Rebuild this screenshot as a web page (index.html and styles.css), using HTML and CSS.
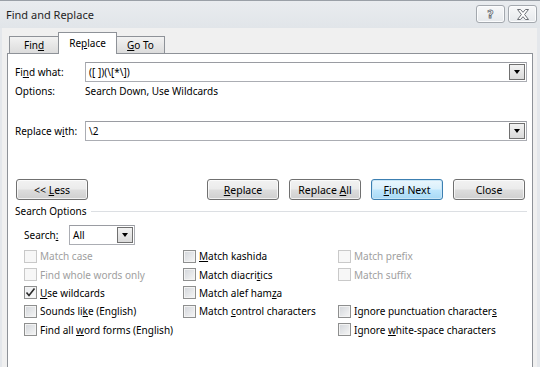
FILE: index.html
```html
<!DOCTYPE html>
<html>
<head>
    <title>Find and Replace</title>
    <meta charset='utf-8'>
    <link rel="stylesheet" href="styles.css">
</head>
<body>
    <div class="window">
        <div class="titlebar">
            <span class="title">Find and Replace</span>
            <div class="caption-buttons">
                <span class="cap-btn help">?</span>
                <span class="cap-btn close">
                    <svg width="14" height="11" viewBox="0 0 14 11">
                        <path d="M1.5 0.5 H4.5 L7 3.3 L9.5 0.5 H12.5 L8.6 5.5 L12.5 10.5 H9.5 L7 7.7 L4.5 10.5 H1.5 L5.4 5.5 Z" fill="#fff" stroke="#6b6f75" stroke-width="1"/>
                    </svg>
                </span>
            </div>
        </div>

        <div class="client">
            <div class="tabs">
                <span class="tab"><span>Fin<u>d</u></span></span>
                <span class="tab active"><span>Re<u>p</u>lace</span></span>
                <span class="tab"><span><u>G</u>o To</span></span>
            </div>

            <div class="panel">
                <!-- find / replace fields -->
                <div class="field-row find-row">
                    <span class="field-label">Fi<u>n</u>d what:</span>
                    <div class="combo">
                        <span class="combo-text">([ ])(\[*\])</span>
                        <span class="drop"><i></i></span>
                    </div>
                </div>
                <div class="field-row options-row">
                    <span class="field-label">Options:</span>
                    <span>Search Down, Use Wildcards</span>
                </div>
                <div class="field-row replace-row">
                    <span class="field-label">Replace w<u>i</u>th:</span>
                    <div class="combo">
                        <span class="combo-text">\2</span>
                        <span class="drop"><i></i></span>
                    </div>
                </div>

                <div class="buttons">
                    <button class="btn">&lt;&lt; <u>L</u>ess</button>
                    <div class="btn-group">
                        <button class="btn"><u>R</u>eplace</button>
                        <button class="btn">Replace <u>A</u>ll</button>
                        <button class="btn default"><u>F</u>ind Next</button>
                        <button class="btn">Close</button>
                    </div>
                </div>

                <div class="group-title">
                    <span>Search Options</span>
                    <span class="rule"></span>
                </div>

                <div class="search-row">
                    <span class="search-label">Search<u>:</u></span>
                    <div class="combo small">
                        <span class="combo-text">All</span>
                        <span class="drop"><i></i></span>
                    </div>
                </div>

                <div class="checks">
                    <label class="check disabled"><span class="box"></span><span>Match case</span></label>
                    <label class="check"><span class="box"></span><span><u>M</u>atch kashida</span></label>
                    <label class="check disabled"><span class="box"></span><span>Match prefix</span></label>

                    <label class="check disabled"><span class="box"></span><span>Find whole words only</span></label>
                    <label class="check"><span class="box"></span><span>Match diacri<u>t</u>ics</span></label>
                    <label class="check disabled"><span class="box"></span><span>Match suffix</span></label>

                    <label class="check checked"><span class="box">
                        <svg width="11" height="11" viewBox="0 0 11 11"><path d="M1.5 5.5 L4 8.5 L9.5 1.5" fill="none" stroke="#2b2b2b" stroke-width="1.6"/></svg>
                    </span><span><u>U</u>se wildcards</span></label>
                    <label class="check"><span class="box"></span><span>Match alef ham<u>z</u>a</span></label>
                    <span class="empty"></span>

                    <label class="check"><span class="box"></span><span>Sounds li<u>k</u>e (English)</span></label>
                    <label class="check"><span class="box"></span><span>Match <u>c</u>ontrol characters</span></label>
                    <label class="check"><span class="box"></span><span>Ignore punctuation character<u>s</u></span></label>

                    <label class="check"><span class="box"></span><span>Find all <u>w</u>ord forms (English)</span></label>
                    <span class="empty"></span>
                    <label class="check"><span class="box"></span><span>Ignore <u>w</u>hite-space characters</span></label>
                </div>
            </div>
        </div>
    </div>
</body>
</html>
```

FILE: styles.css
```css
body {
    margin: 0;
    width: 540px;
    height: 367px;
    overflow: hidden;
    font-family: 'Noto Sans', 'Liberation Sans', Arial, sans-serif;
    font-size: 10px;
    color: #000;
    background: #e4e7eb;
}
u {
    text-decoration-thickness: 1px;
    text-underline-offset: 1px;
}
.window {
    height: 367px;
    display: flex;
    flex-direction: column;
    border-top: 1px solid #9aa0a7;
    box-sizing: border-box;
}
.titlebar {
    height: 27px;
    display: flex;
    align-items: flex-start;
    justify-content: space-between;
    background: linear-gradient(#e9ecef, #e1e5e9);
}
.title {
    margin: 6px 0 0 6px;
    font-size: 11px;
    color: #1f1f1f;
}
.caption-buttons {
    display: flex;
    gap: 3px;
    margin: 4px 3px 0 0;
}
.cap-btn {
    width: 27px;
    height: 16px;
    border: 1px solid #a3a8ae;
    border-radius: 3px;
    background: linear-gradient(#f7f8f9, #e6e9ec);
    display: flex;
    align-items: center;
    justify-content: center;
    box-shadow: inset 0 0 0 1px #fbfcfd;
}
.help {
    font-family: 'DejaVu Sans', sans-serif;
    font-weight: bold;
    font-size: 11px;
    color: #fff;
    -webkit-text-stroke: 0.8px #6b6f75;
}
.client {
    flex: 1;
    margin: 0 3px 0 2px;
    background: #f0f0f0;
    padding: 4px 4px 0 5px;
    display: flex;
    flex-direction: column;
}
.tabs {
    display: flex;
    align-items: flex-end;
    height: 21px;
    margin-left: 2px;
    position: relative;
    z-index: 1;
}
.tab {
    height: 17px;
    border: 1px solid #8e9298;
    border-bottom: none;
    background: linear-gradient(#f2f2f2, #dcdcdc);
    display: flex;
    align-items: center;
    justify-content: center;
    box-sizing: border-box;
    margin-right: -1px;
    white-space: nowrap;
}
.tab:first-child {
    width: 50px;
}
.tab.active {
    height: 22px;
    width: 59px;
    background: #fff;
    margin-bottom: -1px;
    padding-bottom: 2px;
}
.tab:last-child {
    width: 49px;
}
.panel {
    flex: 1;
    background: #fff;
    border: 1px solid #8e9298;
    border-bottom: none;
    padding: 0 5px 0 7px;
    display: flex;
    flex-direction: column;
}
.field-row {
    display: flex;
    align-items: center;
}
.field-label {
    width: 70px;
    flex: none;
}
.find-row {
    margin-top: 8px;
    height: 20px;
}
.options-row {
    margin-top: 1px;
    height: 16px;
}
.replace-row {
    margin-top: 22px;
    height: 20px;
}
.combo {
    flex: 1;
    height: 20px;
    border: 1px solid #abadb3;
    border-top-color: #9a9ca2;
    box-sizing: border-box;
    display: flex;
    align-items: center;
    justify-content: space-between;
}
.combo-text {
    padding-left: 3px;
}
.drop {
    width: 16px;
    height: 16px;
    margin-right: 1px;
    border: 1px solid #707070;
    box-sizing: border-box;
    background: linear-gradient(#f2f2f2, #dadada);
    display: flex;
    align-items: center;
    justify-content: center;
}
.drop i {
    width: 0;
    height: 0;
    border-left: 3.5px solid transparent;
    border-right: 3.5px solid transparent;
    border-top: 4px solid #000;
}
.buttons {
    margin-top: 38px;
    display: flex;
    justify-content: space-between;
    padding-left: 1px;
    padding-right: 2px;
}
.btn-group {
    display: flex;
    gap: 10px;
}
.btn {
    width: 72px;
    height: 21px;
    padding: 0;
    border: 1px solid #707070;
    border-radius: 3px;
    background: linear-gradient(#f2f2f2 0%, #ebebeb 48%, #dddddd 52%, #cfcfcf 100%);
    font-family: inherit;
    font-size: 10.5px;
    color: #000;
    box-shadow: inset 0 0 0 1px rgba(255, 255, 255, 0.7);
}
.btn.default {
    border-color: #3c7fb1;
    background: linear-gradient(#eaf6fd 0%, #d9f0fc 48%, #bee6fd 52%, #a7d9f5 100%);
    box-shadow: inset 0 0 0 1px #c9e6f7;
}
.group-title {
    margin-top: 4px;
    height: 14px;
    display: flex;
    align-items: center;
    gap: 5px;
}
.rule {
    flex: 1;
    height: 1px;
    background: #dcdfe3;
}
.search-row {
    margin-top: 7px;
    height: 20px;
    display: flex;
    align-items: center;
    padding-left: 9px;
}
.search-label {
    width: 45px;
}
.combo.small {
    flex: none;
    width: 66px;
}
.checks {
    margin-top: 2px;
    margin-left: 9px;
    display: grid;
    grid-template-columns: 159px 155px 1fr;
    grid-auto-rows: 18.4px;
}
.check {
    display: flex;
    align-items: center;
    gap: 3px;
    white-space: nowrap;
}
.box {
    width: 13px;
    height: 13px;
    box-sizing: border-box;
    border: 1px solid #8e8f8f;
    background: linear-gradient(135deg, #d2d5da, #f6f6f6);
    box-shadow: inset 0 0 0 1px #f3f3f3;
    display: flex;
    align-items: center;
    justify-content: center;
    flex: none;
}
.check.disabled {
    color: #a0a0a0;
}
.check.disabled .box {
    border-color: #c9c9c9;
    background: #f7f7f7;
    box-shadow: none;
}
.check.checked .box {
    background: linear-gradient(135deg, #e9ebee, #fbfbfb);
}
```
